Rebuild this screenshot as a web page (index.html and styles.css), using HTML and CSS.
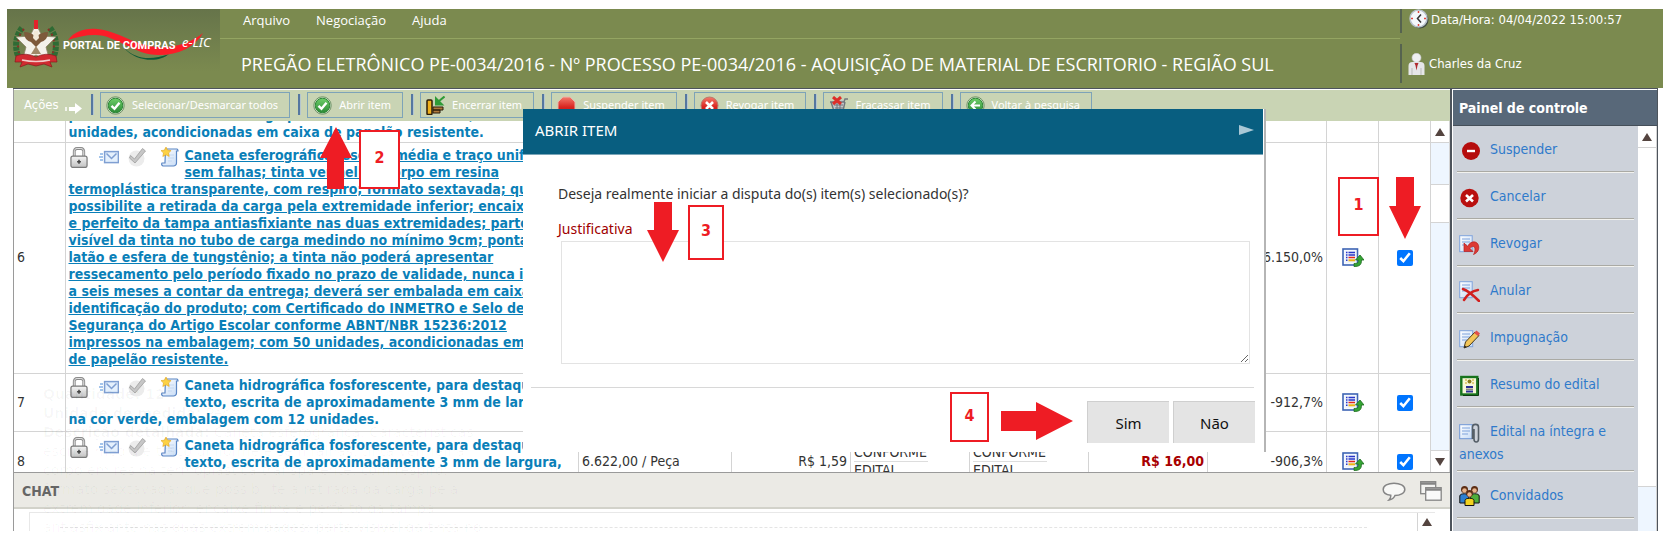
FILE: index.html
```html
<!DOCTYPE html>
<html lang="pt-BR">
<head>
<meta charset="utf-8">
<title>Portal de Compras e-LIC</title>
<link rel="stylesheet" href="styles.css">
</head>
<body>
<svg class="defs" aria-hidden="true">
  <defs>
    <linearGradient id="gGreen" x1="0" y1="0" x2="0" y2="1"><stop offset="0" stop-color="#6fcf6a"/><stop offset="1" stop-color="#2a8a35"/></linearGradient>
    <linearGradient id="gRed" x1="0" y1="0" x2="0" y2="1"><stop offset="0" stop-color="#f47a6c"/><stop offset=".6" stop-color="#d9241f"/><stop offset="1" stop-color="#c01515"/></linearGradient>
    <linearGradient id="gPaper" x1="0" y1="0" x2="1" y2="1"><stop offset="0" stop-color="#fff"/><stop offset="1" stop-color="#c6dbf6"/></linearGradient>
    <linearGradient id="gLock" x1="0" y1="0" x2="0" y2="1"><stop offset="0" stop-color="#f4f4f4"/><stop offset="1" stop-color="#c2c2c2"/></linearGradient>
  </defs>
  <symbol id="i-check" viewBox="0 0 19 19">
    <circle cx="9.500" cy="9.500" r="8.700" fill="#e4eedd" stroke="#6b8f62"/><circle cx="9.500" cy="9.500" r="7.300" fill="url(#gGreen)" stroke="#2c8535"/>
    <path d="M5.500 9.800l3 3 5-6" fill="none" stroke="#fff" stroke-width="2.400"/>
  </symbol>
  <symbol id="i-hammer" viewBox="0 0 19 19">
    <rect x="1" y="4" width="5" height="14.500" rx="1" fill="#f0b11c" stroke="#2d1d08" stroke-width="1.500"/>
    <path d="M7 11h10v3H7zM7 14h7v3H7z" fill="#b07a3c" stroke="#2d1d08"/>
    <path d="M18.500 .5l-6 5M10 2.500v6h6z" stroke="#2f9a37" stroke-width="2" fill="#2f9a37"/>
  </symbol>
  <symbol id="i-stop" viewBox="0 0 19 19">
    <path d="M6 1h7l5 5v7l-5 5H6l-5-5V6z" fill="url(#gRed)" stroke="#e8b4a8"/>
  </symbol>
  <symbol id="i-cross" viewBox="0 0 19 19">
    <circle cx="9.500" cy="9.500" r="8.500" fill="url(#gRed)" stroke="#b9796a"/><path d="M6 6l7 7M13 6l-7 7" stroke="#fff" stroke-width="2.600"/>
  </symbol>
  <symbol id="i-cart" viewBox="0 0 19 19">
    <path d="M1 6h14l1-3h3M2 6l3 9h9l2-9" fill="#c3c7c9" stroke="#70777c" stroke-width="1.400"/><path d="M5 9h9M6 12h8M8 6v9M11 6v9" stroke="#70777c"/>
    <path d="M4 1l8 7M12 1l-8 7" stroke="#dd2f2a" stroke-width="3"/><circle cx="6" cy="17" r="1.500" fill="#555"/><circle cx="13" cy="17" r="1.500" fill="#555"/>
  </symbol>
  <symbol id="i-back" viewBox="0 0 19 19">
    <circle cx="9.500" cy="9.500" r="8.700" fill="#e4eedd" stroke="#6b8f62"/><circle cx="9.500" cy="9.500" r="7.300" fill="url(#gGreen)" stroke="#2c8535"/>
    <path d="M14 9.500H6M9.500 5.500l-4 4 4 4" fill="none" stroke="#fff" stroke-width="2"/>
  </symbol>
  <symbol id="i-lock" viewBox="0 0 19 22">
    <path d="M4.500 10V5a3 3 0 0 1 3-3.500h4A3 3 0 0 1 14.500 5v5" fill="none" stroke="#8b8b8b" stroke-width="3"/><path d="M4.500 10V5a3 3 0 0 1 3-3.500h4A3 3 0 0 1 14.500 5v5" fill="none" stroke="#e6e6e6"/>
    <rect x="1" y="9.500" width="17" height="12" rx="2" fill="url(#gLock)" stroke="#7a7a7a" stroke-width="1.300"/><path d="M9.500 13.500v4M7.500 15.500h4" stroke="#444" stroke-width="1.600"/>
  </symbol>
  <symbol id="i-mail" viewBox="0 0 20 14">
    <rect x="5.600" y="1.600" width="13.800" height="11" fill="#e4f0fd" stroke="#7f9fd2" stroke-width="1.500"/><path d="M7.500 3.500l5 5 5-5" fill="none" stroke="#7f9fd2" stroke-width="1.500"/>
    <path d="M1 4h3M0 7h4M1 10h3" stroke="#86b3e6" stroke-width="1.300"/>
  </symbol>
  <symbol id="i-tick" viewBox="0 0 19 20">
    <circle cx="8.500" cy="11.500" r="8" fill="#ececec"/><path d="M2.500 8.500l4 3.500L14.500 1.500l3 2.500L7 16 1.500 11z" fill="#c6c6c6" stroke="#9d9d9d" stroke-width=".8"/>
  </symbol>
  <symbol id="i-scroll" viewBox="0 0 18 20">
    <path d="M4.500 2H16a2 2 0 0 1 1 2h-1.500v12a3 3 0 0 1-3 3H2a2 2 0 0 1-1-3h3z" fill="url(#gPaper)" stroke="#5a86c4" stroke-width="1.200"/><path d="M7 8h6M7 11h6M7 14h4" stroke="#c3d8f2"/>
    <path d="M5 0l1.600 3.200 3.500.4-2.600 2.400.7 3.500L5 7.800 1.800 9.500l.7-3.500L0 3.600l3.400-.4z" fill="#fcd144" stroke="#e0a31e" stroke-width=".6"/>
  </symbol>
  <symbol id="i-list" viewBox="0 0 22 19">
    <rect x="1" y="1" width="14.500" height="16" fill="#fff" stroke="#3e64b4" stroke-width="1.600"/><rect x="2.500" y="2.500" width="11.500" height="13" fill="#eef4fc"/>
    <path d="M6.500 4.500h6.500M6.500 7h6.500" stroke="#2a36c8" stroke-width="1.500"/><path d="M6.500 9.500h6.500" stroke="#e4281e" stroke-width="1.500"/><path d="M6.500 12.300h6.500" stroke="#edb614" stroke-width="2"/><path d="M4 4.500h1.500M4 7h1.500M4 9.500h1.500M4 12.300h1.500" stroke="#2a36c8" stroke-width="1.400"/>
    <path d="M12 15.500c4 0 4.500-1 4.500-3.500h-3l4.500-5 4 5h-2.500c0 5-2 6.500-7.500 6.500z" fill="#35a534" stroke="#1d6b20" stroke-width=".8"/>
  </symbol>
  <symbol id="s-minus" viewBox="0 0 21 21"><circle cx="12" cy="11" r="9" fill="#b50d0d"/><path d="M8 11h8" stroke="#fff" stroke-width="2.400"/></symbol>
  <symbol id="s-cross" viewBox="0 0 21 21"><circle cx="10.500" cy="11" r="9.200" fill="#b9100f"/><path d="M7 8l7 6.500M14 8l-7 6.500" stroke="#fff" stroke-width="2.600"/></symbol>
  <symbol id="s-revoke" viewBox="0 0 21 21"><rect x=".7" y="1.700" width="12.500" height="16" fill="url(#gPaper)" stroke="#7fa3dc"/><path d="M3 5h8M3 8h8M3 11h5" stroke="#7fa3dc"/><path d="M5 9v8.500h9l-3-3c2-3 5-2.500 5 .5 0 2-.5 4-1.500 5.500 4-1.500 6-5 5-9-1-4-7-6-11 .8z" fill="#dc3a35" stroke="#b81e1e" stroke-width=".7"/></symbol>
  <symbol id="s-annul" viewBox="0 0 21 21"><rect x=".7" y=".7" width="12.500" height="16" fill="url(#gPaper)" stroke="#7fa3dc"/><path d="M3 4h8M3 7h8M3 10h5" stroke="#7fa3dc"/><path d="M4 8c6 2 11 7 16 12M19 9C12 10 8 14 5 19" fill="none" stroke="#d2201f" stroke-width="2.500" stroke-linecap="round"/></symbol>
  <symbol id="s-edit" viewBox="0 0 21 21"><rect x=".7" y="2.700" width="13" height="16" fill="url(#gPaper)" stroke="#7fa3dc"/><path d="M3 6h8M3 9h8M3 12h5" stroke="#7fa3dc"/><path d="M5 20l1.500-6L16 4l4 3.500L10 18z" fill="#f3c659" stroke="#4a3a1a"/><path d="M15 5l2.500-2.500L21 5.500 19 8z" fill="#e0504c"/><path d="M5 20l.8-2.500 2 1.500z" fill="#222"/></symbol>
  <symbol id="s-summary" viewBox="0 0 21 21"><rect x="2.300" y="2" width="16" height="17.500" fill="#f7f7d8" stroke="#17731c" stroke-width="2.400"/><path d="M19.500 3v17.500H4" fill="none" stroke="#0c3a10"/><circle cx="10.500" cy="6.500" r="2" fill="#8a7d1c"/><path d="M6 5h2M13 5h2M6 8h2M13 8h2" stroke="#caa61c"/><path d="M7 12h7M7 16.500h7" stroke="#2a2f94" stroke-width="2"/><path d="M7 14.200h7" stroke="#555"/></symbol>
  <symbol id="s-attach" viewBox="0 0 21 21"><rect x=".7" y="2.700" width="12.500" height="14" fill="url(#gPaper)" stroke="#6f97d6"/><path d="M3 6h8M3 9h8M3 12h6" stroke="#7fa3dc"/><path d="M13.500 17V5c0-3.500 6-3.500 6 0v12c0 4-4.500 4-4.500 0V7" fill="none" stroke="#555f68" stroke-width="1.600"/></symbol>
  <symbol id="s-people" viewBox="0 0 21 21"><circle cx="5.500" cy="4.500" r="3.500" fill="#5c2d14"/><circle cx="5.500" cy="5.500" r="2.300" fill="#e9b48a"/><circle cx="15.500" cy="4.500" r="3.500" fill="#5c2d14"/><circle cx="15.500" cy="5.500" r="2.300" fill="#e9b48a"/><path d="M.8 18V11c0-3 9-3 9 0v7z" fill="#2d7fd0" stroke="#111"/><path d="M11.200 18V11c0-3 9-3 9 0v7z" fill="#4fae3b" stroke="#111"/><circle cx="10.500" cy="8.500" r="3.400" fill="#5c2d14"/><circle cx="10.500" cy="9.500" r="2.200" fill="#e9b48a"/><path d="M6 20.500v-5c0-3 9-3 9 0v5z" fill="#f2d21f" stroke="#111"/></symbol>
</svg>

<header class="top">
  <div class="brand">
    <svg class="logo" viewBox="0 0 213 79" role="img" aria-label="Portal de Compras e-LIC">
      <path d="M15 19c-7 8-8 22-2 32M43 19c7 8 8 22 2 32" fill="none" stroke="#2f6b34" stroke-width="6" stroke-dasharray="4 1"/>
      <path d="M17 20c-6 6-7 14-5 24M41 20c6 6 7 14 5 24" fill="none" stroke="#8a2f25" stroke-width="2" stroke-dasharray="2 4"/>
      <path d="M29 15l6 12 14 1-10 10 4 15-14-7-14 7 4-15L9 28l14-1z" fill="#f4f2ea" stroke="#8f8468" stroke-width=".8"/>
      <path d="M17 23q7 0 12 5 5-5 12-5 0 8-7 10l-5 5-5-5q-7-2-7-10z" fill="#7d5a3b"/>
      <path d="M27 22h4l1 7-3 3-3-3z" fill="#f1e9d8"/><path d="M29 37l5 8H24z" fill="#a08868"/>
      <path d="M27 11h4v9h-4z" fill="#e3212b"/>
      <path d="M9 47q10-4 20 1 10-5 20-1l1 6-7 0 2 5-8-3-8 2-8-2-8 3 2-5-7 0z" fill="#d02b31" stroke="#861a1c" stroke-width=".7"/>
      <path d="M15 51q14 3 28 0" fill="none" stroke="#f3caca" stroke-width="1.500"/>
      <path d="M117 39c12 11 26 13 45 6-10 9-33 8-45-6z" fill="#0c5a38"/>
      <path d="M61 31C68 22 78 19 90 20c22 2 36 16 60 18 18 1 34-4 46-14-8 14-24 22-44 22-26 0-42-20-64-20-10 0-18 2-27 5z" fill="#fb1d28"/>
      <text x="56" y="40" class="logo-name">PORTAL DE COMPRAS</text>
      <text x="175" y="38" class="logo-tag">e-LIC</text>
    </svg>
  </div>
  <div class="headline">
    <nav class="menu"><a href="#">Arquivo</a><a href="#">Negociação</a><a href="#">Ajuda</a></nav>
    <h1>PREGÃO ELETRÔNICO PE-0034/2016 - Nº PROCESSO PE-0034/2016 - AQUISIÇÃO DE MATERIAL DE ESCRITORIO - REGIÃO SUL</h1>
  </div>
  <div class="session">
    <p class="clock"><svg width="20" height="20" viewBox="0 0 20 20"><circle cx="11" cy="11" r="8.500" fill="#3f4a40"/><circle cx="9.500" cy="9.500" r="8.500" fill="#f4f8fb" stroke="#b8c2cc" stroke-width="1.500"/><path d="M12 5.500L8.500 9.500l3.500 4" fill="none" stroke="#333" stroke-width="1.500"/><path d="M9.500 2v2M9.500 15v2M2 9.500h2M15 9.500h2" stroke="#e0443c" stroke-width="1.500"/></svg><span>Data/Hora: 04/04/2022 15:00:57</span></p>
    <p class="user"><svg width="17" height="22" viewBox="0 0 17 22"><path d="M.5 22v-9q0-4 4-4h8q4 0 4 4v9z" fill="#e6e6e8"/><circle cx="8.500" cy="4.800" r="4.500" fill="#efeff2" stroke="#c9c9cd" stroke-width=".6"/><path d="M6.500 10h4l-1 2.500-1 5-1-5z" fill="#b02a2e"/><path d="M4 15v7M13 15v7" stroke="#bbb"/></svg><span>Charles da Cruz</span></p>
  </div>
</header>

<div class="workspace">
  <main class="content">
    <div class="toolbar">
      <span class="actions">Ações</span>
      <svg class="go" width="18" height="11" viewBox="0 0 18 11"><path d="M1 4v4" stroke="#fff" stroke-width="1.500"/><path d="M4 4h6V0l7 5.500L10 11V8H4z" fill="#fff"/></svg>
      <i class="sep"></i><button type="button"><svg><use href="#i-check"/></svg>Selecionar/Desmarcar todos</button>
      <i class="sep"></i><button type="button"><svg><use href="#i-check"/></svg>Abrir item</button>
      <i class="sep"></i><button type="button"><svg><use href="#i-hammer"/></svg>Encerrar item</button>
      <i class="sep"></i><button type="button"><svg><use href="#i-stop"/></svg>Suspender item</button>
      <i class="sep"></i><button type="button"><svg><use href="#i-cross"/></svg>Revogar item</button>
      <i class="sep"></i><button type="button"><svg><use href="#i-cart"/></svg>Fracassar item</button>
      <i class="sep"></i><button type="button"><svg><use href="#i-back"/></svg>Voltar à pesquisa</button>
    </div>

    <div class="pane">
      <table class="items">
        <colgroup><col class="c-num"><col><col class="c-qty"><col class="c-val"><col class="c-val"><col class="c-val"><col class="c-val"><col class="c-val"><col class="c-act"><col class="c-act"></colgroup>
        <tbody>
          <tr class="r-cut"><td></td><td><div class="cut"><a href="#">possibilite a retirada da carga pela extremidade inferior; embalagem,<br>unidades, acondicionadas em caixa de papelão resistente.</a></div></td><td></td><td></td><td></td><td></td><td></td><td></td><td></td><td></td></tr>
          <tr class="r-tall">
            <td>6</td>
            <td><span class="flags"><svg class="lock"><use href="#i-lock"/></svg><svg class="mail"><use href="#i-mail"/></svg><svg class="tick"><use href="#i-tick"/></svg><svg class="scroll"><use href="#i-scroll"/></svg></span><a href="#" class="on">Caneta esferográfica, escrita média e traço uniforme,<br>sem falhas; tinta vermelha, corpo em resina<br>termoplástica transparente, com respiro; formato sextavada; que<br>possibilite a retirada da carga pela extremidade inferior; encaixe<br>e perfeito da tampa antiasfixiante nas duas extremidades; parte<br>visível da tinta no tubo de carga medindo no mínimo 9cm; ponta<br>latão e esfera de tungstênio; a tinta não poderá apresentar<br>ressecamento pelo período fixado no prazo de validade, nunca inf<br>a seis meses a contar da entrega; deverá ser embalada em caixa<br>identificação do produto; com Certificado do INMETRO e Selo de<br>Segurança do Artigo Escolar conforme ABNT/NBR 15236:2012<br>impressos na embalagem; com 50 unidades, acondicionadas em<br>de papelão resistente.</a></td>
            <td></td><td></td><td></td><td></td><td></td><td class="num">-6.150,0%</td>
            <td class="mid"><svg class="list"><use href="#i-list"/></svg></td><td class="mid"><input type="checkbox" checked aria-label="Selecionar item 6"></td>
          </tr>
          <tr class="r-short">
            <td>7</td>
            <td><span class="flags"><svg class="lock"><use href="#i-lock"/></svg><svg class="mail"><use href="#i-mail"/></svg><svg class="tick"><use href="#i-tick"/></svg><svg class="scroll"><use href="#i-scroll"/></svg></span><a href="#">Caneta hidrográfica fosforescente, para destaque<br>texto, escrita de aproximadamente 3 mm de largura,<br>na cor verde, embalagem com 12 unidades.</a></td>
            <td></td><td></td><td></td><td></td><td></td><td class="num">-912,7%</td>
            <td class="mid"><svg class="list"><use href="#i-list"/></svg></td><td class="mid"><input type="checkbox" checked aria-label="Selecionar item 7"></td>
          </tr>
          <tr class="r-last">
            <td>8</td>
            <td><span class="flags"><svg class="lock"><use href="#i-lock"/></svg><svg class="mail"><use href="#i-mail"/></svg><svg class="tick"><use href="#i-tick"/></svg><svg class="scroll"><use href="#i-scroll"/></svg></span><a href="#">Caneta hidrográfica fosforescente, para destaque<br>texto, escrita de aproximadamente 3 mm de largura,</a></td>
            <td>6.622,00 / Peça</td><td class="num">R$ 1,59</td>
            <td class="terms"><span>CONFORME</span><span>EDITAL</span></td><td class="terms"><span>CONFORME</span><span>EDITAL</span></td>
            <td class="num price">R$ 16,00</td><td class="num">-906,3%</td>
            <td class="mid"><svg class="list"><use href="#i-list"/></svg></td><td class="mid"><input type="checkbox" checked aria-label="Selecionar item 8"></td>
          </tr>
        </tbody>
      </table>
      <div class="bar"><span class="arrow up"></span><span class="thumb"></span><span class="arrow down"></span></div>
    </div>

    <section class="chat">
      <h2>CHAT
        <svg class="talk" width="24" height="19" viewBox="0 0 24 19"><path d="M12 1.200c6 0 10.800 2.600 10.800 6.200S18 13.500 13 13.500c-1 2.500-3 4-6 4.500 1.500-1.500 2-3 1.700-4.800C4 12.600 1.200 10.500 1.200 7.400 1.200 3.800 6 1.200 12 1.200z" fill="#f8f8f6" stroke="#858585" stroke-width="1.500"/></svg>
        <svg width="22" height="20" viewBox="0 0 22 20"><rect x=".7" y=".7" width="15" height="12" fill="#f3f3f1" stroke="#858585" stroke-width="1.300"/><path d="M1 2.500h15" stroke="#858585" stroke-width="2.500"/><rect x="5.700" y="6.700" width="15.500" height="12.500" fill="#fafafa" stroke="#858585" stroke-width="1.300"/><path d="M6 8.500h15" stroke="#858585" stroke-width="2.500"/></svg>
      </h2>
      <div class="log"><span class="rule"></span><span class="arrow up"></span></div>
    </section>

    <p class="residue" aria-hidden="true"><b>Quantidade: 12</b><br><b>Unidade de medida:</b> Peça<br><b>Descrição detalhada:</b> Caneta esferografica. Características<br>escrita média e traço uniforme e sem falhas, tinta vermelha<br>corpo em resina termoplástica transparente, com respiro;<br>formato sextavada; que possibilite a retirada da carga pela<br>extremidade inferior; encaixe firme e perfeito da tampa<br>antiasfixiante nas duas extremidades; parte visível da tinta no</p>
  </main>

  <aside class="panel">
    <h2>Painel de controle</h2>
    <div class="panel-body">
      <ul>
        <li><a href="#"><svg><use href="#s-minus"/></svg>Suspender</a></li>
        <li><a href="#"><svg><use href="#s-cross"/></svg>Cancelar</a></li>
        <li><a href="#"><svg><use href="#s-revoke"/></svg>Revogar</a></li>
        <li><a href="#"><svg><use href="#s-annul"/></svg>Anular</a></li>
        <li><a href="#"><svg><use href="#s-edit"/></svg>Impugnação</a></li>
        <li><a href="#"><svg><use href="#s-summary"/></svg>Resumo do edital</a></li>
        <li><a href="#"><svg><use href="#s-attach"/></svg>Edital na íntegra e anexos</a></li>
        <li><a href="#"><svg><use href="#s-people"/></svg>Convidados</a></li>
      </ul>
      <div class="bar"><span class="arrow up"></span><span class="thumb"></span></div>
    </div>
  </aside>
</div>

<div class="dialog" role="dialog" aria-labelledby="dlg-title">
  <h2 id="dlg-title">ABRIR ITEM<svg width="17" height="10" viewBox="0 0 17 10"><path d="M1 0l15 5-15 5z" fill="#a9c8d6"/></svg></h2>
  <div class="dialog-body">
    <p>Deseja realmente iniciar a disputa do(s) item(s) selecionado(s)?</p>
    <label for="just">Justificativa</label>
    <textarea id="just"></textarea>
  </div>
  <div class="dialog-foot"><button type="button">Sim</button><button type="button">Não</button></div>
</div>

<span class="mark m1">1</span><svg class="ptr p1" viewBox="0 0 32 62"><path d="M7 0h18v29h7L16 62 0 29h7z"/></svg>
<span class="mark m2">2</span><svg class="ptr p2" viewBox="0 0 32 62"><path d="M7 62h17V31h8L16 0 0 31h7z"/></svg>
<span class="mark m3">3</span><svg class="ptr p3" viewBox="0 0 32 60"><path d="M7 0h18v28h7L16 60 0 28h7z"/></svg>
<span class="mark m4">4</span><svg class="ptr p4" viewBox="0 0 72 38"><path d="M0 9h35V0l37 19-37 19v-9H0z"/></svg>
</body>
</html>
```
FILE: styles.css
```css
* { box-sizing: border-box; }
body {
  margin: 0;
  padding: 9px 6px 3px 7px;
  height: 100vh;
  display: flex;
  flex-direction: column;
  overflow: hidden;
  position: relative;
  background: #fff;
  color: #333;
  font: 14px/17px "DejaVu Sans Condensed", "Noto Sans", sans-serif;
}
h1, h2, p, ul { margin: 0; padding: 0; font-weight: 400; }
h2 { font-size: 14px; }
a { text-decoration: none; }
.defs { position: absolute; width: 0; height: 0; }

/* header */
.top { display: flex; flex: none; height: 79px; background: #7b8a4f; color: #fff; }
.brand { flex: none; width: 213px; background: linear-gradient(#66744a, #7b8a4f 80%); }
.logo { display: block; width: 213px; height: 79px; }
.logo-name { font: 700 11px Roboto, sans-serif; fill: #fff; }
.logo-tag { font: italic 13px "Noto Sans", sans-serif; fill: #fff; }
.headline { flex: 1; min-width: 0; }
.menu {
  display: flex;
  gap: 26px;
  height: 30px;
  padding: 2px 0 0 23px;
  border-bottom: 1px solid #94a562;
  font-family: "Open Sans", sans-serif;
  font-size: 13px;
  line-height: 18px;
}
.menu a { color: #fff; }
.headline h1 { padding: 13px 0 0 21px; font: 18px/24px "Open Sans", sans-serif; white-space: nowrap; }
.session { flex: none; width: 263px; font-size: 13px; }
.session p { display: flex; align-items: center; border-left: 2px solid #56634f; }
.clock { height: 24px; padding: 0 0 4px 7px; gap: 2px; margin-bottom: 11px; }
.user { height: 39px; padding-left: 6px; gap: 4px; }

/* workspace */
.workspace { flex: 1; min-height: 0; margin: 0 5px 0 6px; display: flex; border-top: 1px solid #4d545c; }
.content { flex: 1; min-width: 0; display: flex; flex-direction: column; border-left: 1px solid #9a9a9a; position: relative; }
.toolbar {
  flex: none;
  display: flex;
  align-items: flex-start;
  height: 31px;
  padding: 2px 0 0 10px;
  margin-top: 1px;
  background: #c9d4b4;
  color: #fff;
}
.toolbar button {
  display: flex;
  align-items: center;
  gap: 7px;
  height: 26px;
  padding: 0 11px 0 5px;
  border: 1px solid #7da3b8;
  background: none;
  color: #fff;
  font: 11px/16px "Noto Sans", sans-serif;
  white-space: nowrap;
}
.toolbar button svg { width: 19px; height: 19px; }
.actions { font-size: 13px; width: 41px; line-height: 26px; }
.go { margin-top: 11px; }
.sep { width: 3px; height: 21px; margin: 2px 6px 0 8px; background: #5577a0; border-right: 1px solid #b4c6cf; }
.pane { flex: 1; min-height: 0; display: flex; overflow: hidden; }
.items { flex: 1; border-collapse: collapse; table-layout: fixed; width: 100%; height: 0; }
.c-num { width: 51px; }
.c-qty { width: 153px; }
.c-val { width: 119px; }
.c-act { width: 52px; }
td { padding: 0 3px; border: 1px solid #d4d4d4; border-width: 0 1px 1px 0; white-space: nowrap; vertical-align: middle; }
td a { color: #0a7fb8; font-weight: 700; }
td a.on { text-decoration: underline; }
.cut { height: 20px; overflow: hidden; display: flex; flex-direction: column; justify-content: flex-end; }
.r-cut { height: 21px; }
.r-tall { height: 231px; }
.r-short { height: 58px; }
.r-last { height: 60px; }
.r-last td:nth-child(2) { vertical-align: top; padding-top: 5px; }
.flags { float: left; width: 116px; height: 34px; display: flex; align-items: flex-start; }
.flags svg { flex: none; }
.lock { width: 18px; height: 21px; margin: 0 11px 0 1px; }
.mail { width: 20px; height: 14px; margin: 3px 9px 0 0; }
.tick { width: 19px; height: 20px; margin-right: 14px; }
.scroll { width: 18px; height: 20px; }
.num { text-align: right; }
.mid { text-align: center; }
.mid input { width: 16px; height: 16px; margin: 0; vertical-align: middle; }
.list { width: 22px; height: 19px; vertical-align: middle; }
.terms span { display: block; line-height: 17px; }
.terms span:first-child { border-bottom: 1px solid #ddd; width: 74px; }
.price { color: #a80000; font-weight: 700; }

/* scroll bars */
.bar { flex: none; width: 19px; display: flex; flex-direction: column; background: #eef6ff; border-right: 1px solid #d4d4d4; }
.arrow { flex: none; height: 22px; display: flex; align-items: center; justify-content: center; background: #fff; border: 1px solid #d4d4d4; border-width: 0 0 1px; }
.arrow::before { content: ""; border: 5px solid transparent; }
.up::before { border-top-width: 0; border-bottom: 8px solid #54443f; }
.down::before { border-bottom-width: 0; border-top: 8px solid #54443f; }
.down { margin-top: auto; border-width: 1px 0 0; }
.thumb { background: #fff; border: 1px solid #d4d4d4; border-width: 1px 0; }
.pane .thumb { height: 39px; margin-top: 41px; }

/* chat */
.chat { flex: none; height: 59px; border-top: 1px solid #9a9a9a; }
.chat h2 {
  display: flex;
  align-items: center;
  height: 36px;
  padding: 2px 8px 0;
  background: #ebeae5;
  border-bottom: 2px solid #d2d2ca;
  color: #666;
  font-weight: 700;
}
.talk { margin: 0 14px 0 auto; }
.log { height: 19px; margin: 3px 15px 0; border: 1px solid #e8e8e8; border-width: 1px 0 0 1px; display: flex; }
.rule { flex: 1; height: 15px; margin: 0 50px 0 30px; border-bottom: 1px dashed #e4e4e4; }
.log .arrow { width: 18px; height: 18px; border-width: 0 0 0 1px; }
.residue { position: absolute; left: 29px; bottom: -6px; font: 14px/19px "DejaVu Sans", sans-serif; color: rgba(0, 0, 0, .03); white-space: nowrap; pointer-events: none; }

/* control panel */
.panel { flex: none; width: 208px; display: flex; flex-direction: column; border: 2px solid #4d545c; border-width: 0 1px 0 2px; }
.panel h2 { flex: none; height: 36px; margin: 1px 0 0 1px; padding-left: 6px; line-height: 37px; background: #586879; border-bottom: 1px solid #454f59; color: #fff; font-weight: 700; }
.panel-body { flex: 1; min-height: 0; display: flex; margin-left: 1px; overflow: hidden; }
.panel ul { flex: 1; list-style: none; padding: 0 4px; background: #cdd2da; }
.panel li { min-height: 47px; padding: 12px 0 6px 2px; border-bottom: 1px solid #f2f2ee; box-shadow: inset 0 -1px #aaaaa4; line-height: 22px; }
.panel a { color: #2f7acb; }
.panel li svg { width: 21px; height: 21px; margin-right: 10px; vertical-align: middle; }
.panel .thumb { height: 339px; border-top: 0; }

/* dialog */
.dialog { position: absolute; left: 523px; top: 109px; width: 743px; background: #fff; border-right: 2px solid #b5b5b5; color: #333; font-family: "Noto Sans", sans-serif; }
.dialog h2 { display: flex; align-items: center; justify-content: space-between; height: 46px; margin-right: 1px; padding: 0 8px 4px 12px; background: #085e80; border-bottom: 1px solid #7aa5b8; color: #fff; font-size: 15px; line-height: 20px; }
.dialog-body { margin: 0 10px 0 8px; padding: 29px 4px 23px 27px; border-bottom: 1px solid #d8d8d8; }
.dialog-body p { line-height: 20px; }
.dialog-body label { display: block; margin: 15px 0 2px; line-height: 20px; color: #a00000; }
.dialog-body textarea { display: block; width: 689px; max-width: 100%; height: 123px; margin-left: 3px; padding: 4px; border: 1px solid #e3e3e3; background: #fff; font: inherit; }
.dialog-foot { display: flex; justify-content: flex-end; gap: 4px; padding: 13px 9px 9px; }
.dialog-foot button { width: 82px; height: 42px; border: 1px solid #cfcfcf; border-width: 1px 0 0 1px; background: #e4e4e4; color: #111; font: 15px/20px "Noto Sans", sans-serif; }

/* tutorial callouts */
.mark { position: absolute; display: flex; align-items: center; justify-content: center; padding-bottom: 4px; border: 2px solid #ee1c24; background: #fff; color: #ee1c24; font-size: 16px; font-weight: 700; }
.ptr { position: absolute; fill: #ee1c24; }
.m1 { left: 1338px; top: 177px; width: 41px; height: 59px; }
.m2 { left: 359px; top: 130px; width: 41px; height: 59px; }
.m3 { left: 688px; top: 205px; width: 36px; height: 55px; }
.m4 { left: 950px; top: 392px; width: 39px; height: 50px; }
.p1 { left: 1389px; top: 177px; width: 32px; height: 62px; }
.p2 { left: 320px; top: 127px; width: 32px; height: 62px; }
.p3 { left: 647px; top: 202px; width: 32px; height: 60px; }
.p4 { left: 1001px; top: 402px; width: 72px; height: 38px; }
```
